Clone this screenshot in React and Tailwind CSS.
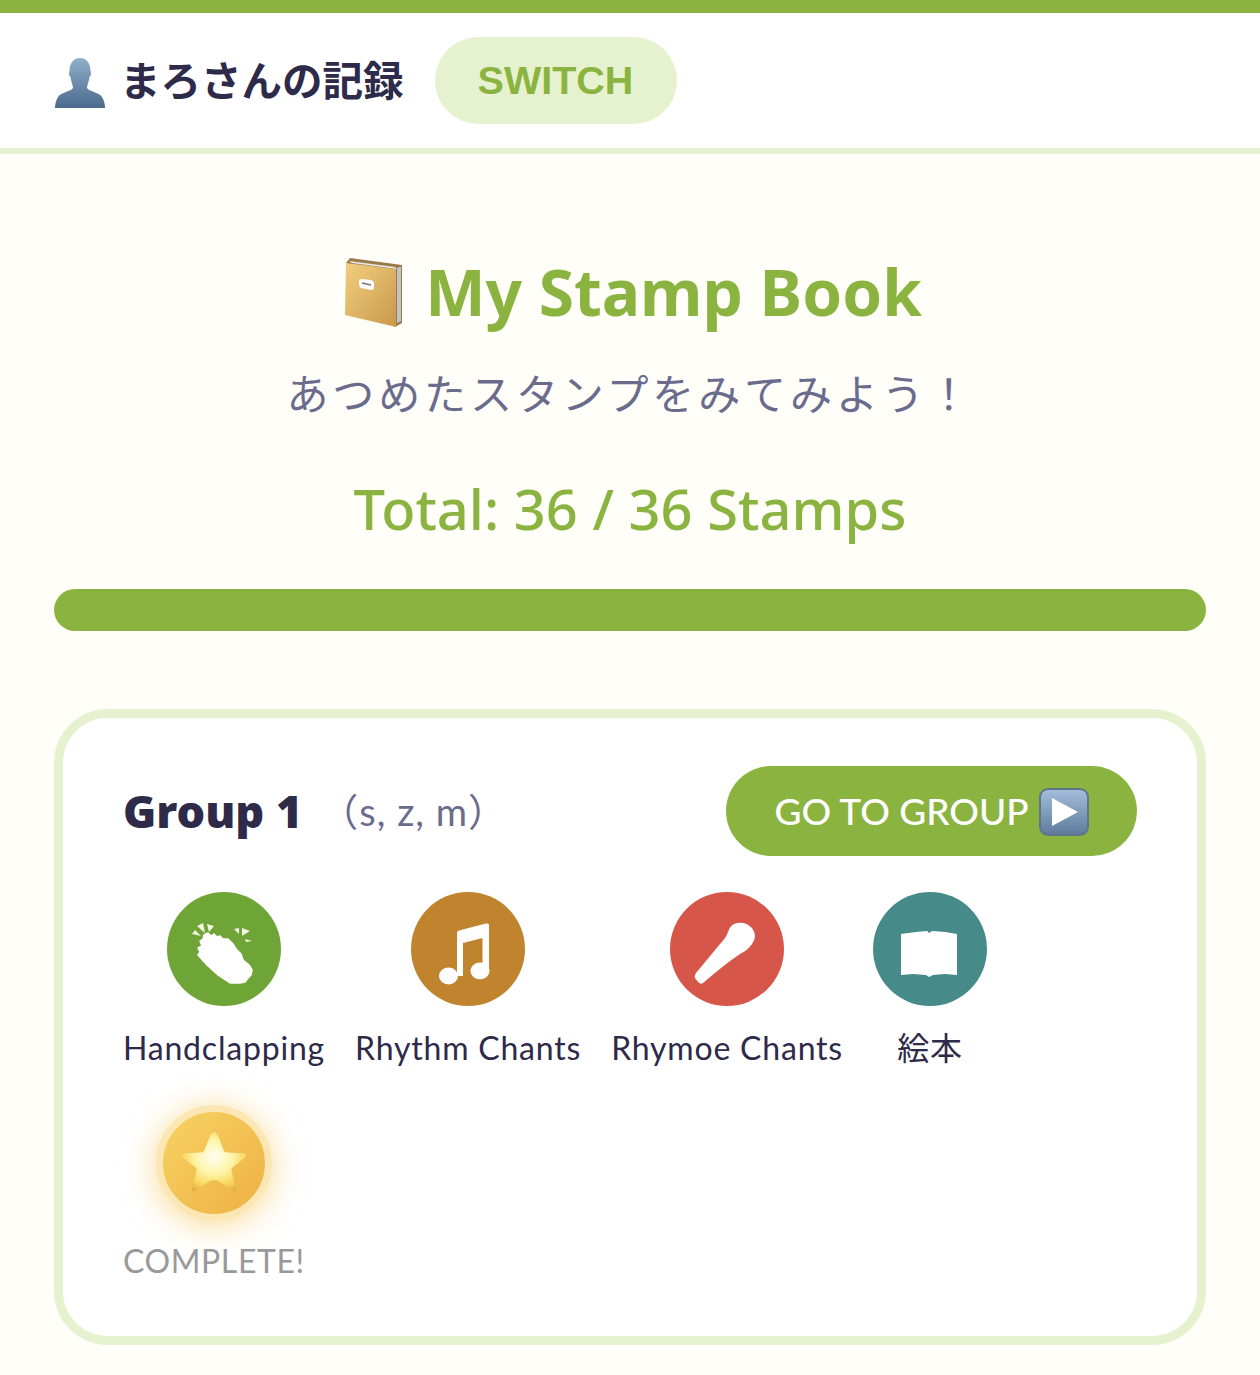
const JP = '"Noto Sans CJK JP"';
const ROUND = `"Lato","Noto Sans CJK JP",sans-serif`;
const TITLE = `"Noto Sans","Noto Sans CJK JP",sans-serif`;

function Person() {
  return (
    <svg width="52" height="50" viewBox="0 0 52 50" className="mt-[5px] shrink-0">
      <defs>
        <linearGradient id="pg" x1="0" y1="0" x2="0" y2="1">
          <stop offset="0" stopColor="#8fb0cc" />
          <stop offset="1" stopColor="#4c6a8c" />
        </linearGradient>
      </defs>
      <path d="M26 0C33 0 36.500 6 36.500 13C37.500 15 37 18 35.500 19C35 24 33 27 33 30C35 33.500 45 34 48 39C50 42 51 46 51 50H1C1 46 2 42 4 39C7 34 17 33.500 19 30C19 27 17 24 16.500 19C15 18 14.500 15 15.500 13C15.500 6 19 0 26 0Z" fill="url(#pg)" />
    </svg>
  );
}

function NoteBook() {
  return (
    <svg width="58" height="70" viewBox="0 0 58 70" className="shrink-0">
      <defs>
        <linearGradient id="bg1" x1="0" y1="0" x2="1" y2="1">
          <stop offset="0" stopColor="#f2cf7f" />
          <stop offset="1" stopColor="#c9984a" />
        </linearGradient>
      </defs>
      <path d="M1 6L5 1L57 8V66L50 70Z" fill="#9a7a48" />
      <path d="M52 11L56 9.500V64L52 66Z" fill="#c4c4c8" />
      <path d="M4 4L50 10L52 12L7 6Z" fill="#e8e8e8" />
      <path d="M1 6L51 12V70L0 58Z" fill="url(#bg1)" />
      <path d="M16 22L26 23Q29 24 29 27V30Q29 33 26 33L16 31Q14 30 14 27V24Q14 22 16 22Z" fill="#fff" />
      <path d="M17 26L26 28" stroke="#777" strokeWidth="1.500" />
    </svg>
  );
}

function Play() {
  return (
    <svg width="50" height="48" viewBox="0 0 50 48" className="mt-[2px] shrink-0">
      <defs>
        <linearGradient id="pl" x1="0" y1="0" x2="0" y2="1">
          <stop offset="0" stopColor="#a3bfdc" />
          <stop offset="1" stopColor="#5f7b9c" />
        </linearGradient>
      </defs>
      <rect x="1" y="1" width="48" height="46" rx="8" fill="url(#pl)" stroke="#61758a" strokeWidth="2" />
      <path d="M13 10L39 24L13 38Z" fill="#fff" />
    </svg>
  );
}

function Clap() {
  return (
    <svg width="114" height="114" viewBox="0 0 114 114" className="absolute inset-0">
      <path d="M33 49L36 47L37 43L41 41L44 44L47 42L50 45L53 44L56 47L61 47L66 52L69 57L74 62L76 68L82 73L85 78L84 83L81 86L78 90L73 91L63 91L51 83L40 73L31 63L33 60L31 56L35 54Z" fill="#fff" stroke="#fff" strokeLinejoin="round" strokeWidth="1.500" />
      <path d="M25 42L28 38L34 44ZM30 34L36 31L38 41ZM40 32L47 34L42 40ZM67 37L72 36L72 42ZM75 36L83 39L75 44ZM78 47L85 49L79 50Z" fill="#f3f8e4" />
    </svg>
  );
}

function Note() {
  return (
    <svg width="114" height="114" viewBox="0 0 114 114" className="absolute inset-0">
      <path d="M46 41Q46 39 48 38.500L75 31.500Q78 31 78 33V78H71.500V46L52 51V84H46Z" fill="#fff" />
      <ellipse cx="69" cy="79" rx="9.500" ry="8.500" fill="#fff" />
      <ellipse cx="37.500" cy="84" rx="9.500" ry="8.500" fill="#fff" />
    </svg>
  );
}

function Mic() {
  return (
    <svg width="114" height="114" viewBox="0 0 114 114" className="absolute inset-0">
      <path d="M64 32Q74 28 82 36Q88 44 82 52Q78 58 70 62Q55 72 33 91Q31 93 28 90L25 86Q24 84 26 81L50 52Q56 46 58 40Q60 34 64 32Z" fill="#fff" />
    </svg>
  );
}

function OpenBook() {
  return (
    <svg width="114" height="114" viewBox="0 0 114 114" className="absolute inset-0">
      <path d="M28 42L43 40L54 39L56 41L59 39L72 40L84 42V83L72 82L60 83L56 85L53 83L40 82L28 83Z" fill="#fff" />
    </svg>
  );
}

function Star() {
  return (
    <svg width="68" height="66" viewBox="0 0 62 60">
      <defs>
        <radialGradient id="st" cx="0.5" cy="0.42" r="0.72">
          <stop offset="0" stopColor="#fffff2" />
          <stop offset="0.4" stopColor="#fef4a8" />
          <stop offset="0.7" stopColor="#f9d65c" />
          <stop offset="1" stopColor="#d19a33" />
        </radialGradient>
      </defs>
      <path d="M31 2Q33 2 34.500 5L40 19Q41 20 43 20.500L58 21Q62 22 59 25L48 34Q46.500 35 47 37L51 53Q52 57 48 55L34 46Q31 45 28 46L14 55Q10 57 11 53L15 37Q15.500 35 14 34L3 25Q0 22 4 21L19 20.500Q21 20 22 19L27.500 5Q29 2 31 2Z" fill="url(#st)" />
    </svg>
  );
}

const stamps = [
  { label: "Handclapping", bg: "bg-[#6ea536]", Icon: Clap },
  { label: "Rhythm Chants", bg: "bg-[#c0832e]", Icon: Note },
  { label: "Rhymoe Chants", bg: "bg-[#d6564a]", Icon: Mic },
  { label: "絵本", bg: "bg-[#468a8a]", Icon: OpenBook },
];

function Stamp({ label, bg, Icon }) {
  return (
    <div className="flex min-w-[114px] flex-col items-center">
      <div className={`relative h-[114px] w-[114px] rounded-full ${bg}`}>
        <Icon />
      </div>
      <div className="mt-[22px] text-[32px] leading-[40px] tracking-[0.8px] whitespace-nowrap text-[#2d2a4a]">{label}</div>
    </div>
  );
}

export default function App() {
  return (
    <div className="min-h-[1375px] bg-[#fffef9]" style={{ fontFamily: ROUND }}>
      <header className="flex h-[154px] items-center border-t-[13px] border-b-[6px] border-t-[#8ab43f] border-b-[#e6f2cf] bg-white pl-[54px]">
        <Person />
        <h2 className="mb-[4px] ml-[14px] text-[40.5px] leading-[48px] font-bold text-[#2d2a4a]" style={{ fontFamily: JP }}>
          まろさんの記録
        </h2>
        <button className="ml-[31px] flex h-[87px] w-[242px] items-center justify-center rounded-[44px] bg-[#e6f2cf] text-[39.5px] font-bold text-[#8ab43f]" style={{ fontFamily: '"Liberation Sans"' }}>
          SWITCH
        </button>
      </header>

      <main className="px-[54px]">
        <section className="flex flex-col items-center pt-[103px]">
          <h1 className="ml-[7px] flex h-[70px] items-center gap-[22px] text-[64px] font-bold text-[#8ab43f]" style={{ fontFamily: TITLE }}>
            <NoteBook />
            <span>My Stamp Book</span>
          </h1>
          <p className="mt-[37px] text-[42px] leading-[56px] tracking-[3.9px] text-[#6b6b8d]" style={{ fontFamily: JP }}>
            あつめたスタンプをみてみよう！
          </p>
          <p className="mt-[52px] text-[56px] leading-[72px] font-medium text-[#8ab43f]" style={{ fontFamily: TITLE }}>
            Total: 36 / 36 Stamps
          </p>
        </section>

        <div className="mt-[45px] h-[42px] rounded-[21px] bg-[#8ab43f]" />

        <section className="mt-[78px] h-[636px] rounded-[54px] border-[9px] border-[#e6f2cf] bg-white pt-[48px] pr-[60px] pl-[60px]">
          <div className="flex items-center justify-between">
            <div className="flex items-center">
              <h3 className="text-[45px] leading-[56px] font-black text-[#2d2a4a]" style={{ fontFamily: TITLE }}>
                Group 1
              </h3>
              <span className="ml-[18px] text-[38px] tracking-[1px] text-[#6b6b8d]">（s, z, m）</span>
            </div>
            <button className="flex h-[90px] w-[411px] items-center justify-center gap-[10px] rounded-[45px] bg-[#8ab43f] text-[37px] font-medium text-white">
              <span>GO TO GROUP</span>
              <Play />
            </button>
          </div>

          <div className="mt-[36px] flex flex-wrap gap-x-[30px] gap-y-[37px]">
            {stamps.map((s) => (
              <Stamp key={s.label} {...s} />
            ))}
            <div className="w-full">
              <div className="flex w-fit flex-col items-center">
                <div className="flex h-[116px] w-[116px] items-center justify-center rounded-full border-[7px] border-[#fae7b4] bg-gradient-to-br from-[#f7d263] to-[#eeb044] shadow-[0_4px_32px_rgba(245,190,70,0.6)]">
                  <Star />
                </div>
                <div className="mt-[20px] text-[32px] leading-[40px] tracking-[0.6px] whitespace-nowrap text-[#999999]">COMPLETE!</div>
              </div>
            </div>
          </div>
        </section>
      </main>
    </div>
  );
}
